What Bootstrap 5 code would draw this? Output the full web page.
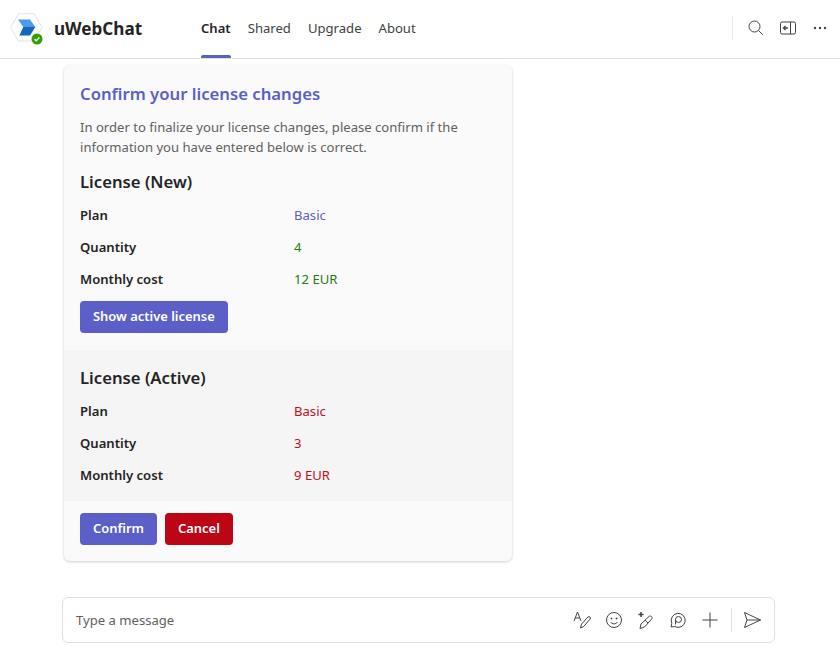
<!DOCTYPE html>
<html lang="en"><head><meta charset="utf-8">
<link href="https://cdn.jsdelivr.net/npm/bootstrap@5.3.0/dist/css/bootstrap.min.css" rel="stylesheet">
<style>
html,body{height:652px;overflow:hidden}
body{font-family:"Noto Sans","Open Sans","Liberation Sans",sans-serif;font-size:13.1px;color:#242424;background:#fff}
.shell{height:652px}
.topbar{height:59px;border-bottom:1px solid #e0e0e0;padding:0 13px 0 10px}
.logo-wrap{width:33px;height:32px;position:relative;margin-right:11px}
.presence{position:absolute;left:21px;top:20px;width:12px;height:12px}
.appname{font-size:17.1px;font-weight:700;color:#242424;width:131px;line-height:24px}
.tabs{gap:17px;height:58px}
.tabitem{height:58px;line-height:57px;color:#424242;font-size:13.1px;position:relative}
.tabitem.on{font-weight:600;color:#242424}
.tabitem.on::after{content:"";position:absolute;left:0;right:0;bottom:0;height:3px;background:#5b5fc7;border-radius:2px 2px 0 0}
.vline{width:1px;height:24px;background:#e8e8e8;margin-right:-1px}
.chatzone{padding:6px 0 0 64px}
.panel{width:448px;height:496px;background:#fafafa;border-radius:6px;box-shadow:0 1px 3px rgba(0,0,0,.2);overflow:hidden}
.topblock{padding:17px 16px 0;height:285px}
.ttl{font-size:16.7px;font-weight:600;color:#5b5fc7;line-height:24px;margin:0 0 11px}
.intro{color:#616161;line-height:20px;margin:0 0 13px}
.sect{font-size:16.7px;font-weight:600;line-height:24px;margin:0 0 6px;color:#242424}
.datarow{height:32px;align-items:center}
.lab{width:214px;font-weight:600;color:#242424}
.v-brand{color:#5b5fc7}.v-green{color:#237b17}.v-red{color:#c50f1f}
.actbtn{height:32px;padding:0 13px;border:0;border-radius:4px;font-size:12.95px;font-weight:600;color:#fff;background:#5b5fc7}
.actbtn.red{background:#bc0515}
.midblock{background:#f5f5f5;height:151px;padding:16px 16px 0}
.actgap{margin-top:5px}
.botblock{padding:12px 16px 0;gap:8px}
.composer{position:absolute;left:62px;top:597px;width:713px;height:46px;border:1px solid #e0e0e0;border-radius:6px;background:#fff;padding:0 12px 0 13px;color:#616161}
.composer svg{display:block}
.msghint{padding-top:1px}
.toolrow{gap:12px}
.topicons{gap:16px;margin-bottom:2px}
.dotsicon{margin-left:1px}
.sepv{width:1px;height:24px;background:#e0e0e0;margin:0 -2px 0 -1px}
</style></head><body>
<div class="shell position-relative">
<header class="topbar d-flex align-items-center">
  <div class="logo-wrap">
    <svg width="33" height="32" viewBox="0 0 33 32"><path d="M8.500 .8h15.500L32.300 14.500 24 28H8.500L.5 14.500z" fill="#fff" stroke="#e3e3e3"/><path d="M8 6.500h12l5.300 7.500h-12z" fill="#4a9be8"/><path d="M13.300 14h12l-5.300 8.500H9.300z" fill="#1466b8"/></svg>
    <svg class="presence" viewBox="0 0 12 12"><circle cx="6" cy="6" r="5.500" fill="#34a000"/><path d="M3.500 6.200l1.700 1.600 3.200-3.300" fill="none" stroke="#fff" stroke-width="1.300"/></svg>
  </div>
  <div class="appname">uWebChat</div>
  <nav class="tabs d-flex ms-3">
    <div class="tabitem on">Chat</div><div class="tabitem">Shared</div><div class="tabitem">Upgrade</div><div class="tabitem">About</div>
  </nav>
  <div class="ms-auto d-flex align-items-center topicons">
    <div class="vline"></div>
    <svg width="16" height="16" viewBox="0 0 16 16" fill="none" stroke="#424242"><circle cx="6.500" cy="6.500" r="5.500"/><path d="M10.500 10.500L15 15"/></svg>
    <svg width="16" height="14" viewBox="0 0 16 14" fill="none" stroke="#424242"><rect x=".5" y="1" width="15" height="12" rx="1.500"/><path d="M10.500 1v12"/><path d="M8 7H3.500M5.500 5L3.500 7l2 2" stroke-width="1.300"/></svg>
    <svg class="dotsicon" width="14" height="4" viewBox="0 0 14 4" fill="#424242"><circle cx="2" cy="2" r="1.200"/><circle cx="7" cy="2" r="1.200"/><circle cx="12" cy="2" r="1.200"/></svg>
  </div>
</header>
<main class="chatzone">
  <section class="panel d-flex flex-column">
    <div class="topblock">
      <h1 class="ttl">Confirm your license changes</h1>
      <p class="intro">In order to finalize your license changes, please confirm if the information you have entered below is correct.</p>
      <h2 class="sect">License (New)</h2>
      <div class="d-flex datarow"><div class="lab">Plan</div><div class="v-brand">Basic</div></div>
      <div class="d-flex datarow"><div class="lab">Quantity</div><div class="v-green">4</div></div>
      <div class="d-flex datarow"><div class="lab">Monthly cost</div><div class="v-green">12 EUR</div></div>
      <button class="actbtn actgap">Show active license</button>
    </div>
    <div class="midblock">
      <h2 class="sect">License (Active)</h2>
      <div class="d-flex datarow"><div class="lab">Plan</div><div class="v-red">Basic</div></div>
      <div class="d-flex datarow"><div class="lab">Quantity</div><div class="v-red">3</div></div>
      <div class="d-flex datarow"><div class="lab">Monthly cost</div><div class="v-red">9 EUR</div></div>
    </div>
    <div class="botblock d-flex">
      <button class="actbtn">Confirm</button><button class="actbtn red">Cancel</button>
    </div>
  </section>
</main>
<div class="composer d-flex align-items-center justify-content-between">
  <span class="msghint">Type a message</span>
  <div class="d-flex align-items-center toolrow">
    <svg width="20" height="20" viewBox="0 0 20 20" fill="none" stroke="#424242"><path d="M2 11L5.500 2 9 11M3.200 8h4.600"/><path d="M8.500 18l1-4 6.500-7c1.200-1.200 3.200.5 2.200 2l-6.500 7.500z"/></svg>
    <svg width="20" height="20" viewBox="0 0 20 20" fill="none" stroke="#424242"><circle cx="10" cy="10" r="7.500"/><circle cx="7.500" cy="8.500" r=".9" fill="#424242" stroke="none"/><circle cx="12.500" cy="8.500" r=".9" fill="#424242" stroke="none"/><path d="M6.500 12c1.800 2.500 5.200 2.500 7 0"/></svg>
    <svg width="20" height="20" viewBox="0 0 20 20" fill="none" stroke="#424242"><path d="M4 18.500l1-4.500 8-7.500c1.500-1.300 4 .5 2.800 2.300L8.500 17z"/><path d="M9 10l3 3"/><path d="M5 2v5M2.500 4.500h5" stroke-width="1.500"/></svg>
    <svg width="20" height="20" viewBox="0 0 20 20" fill="none" stroke="#424242"><path d="M3 17l.8-3.800A7 7 0 1 1 6.800 16.500z"/><circle cx="10.500" cy="9.500" r="3"/><path d="M7.500 14.500V9.500"/></svg>
    <svg width="20" height="20" viewBox="0 0 20 20" fill="none" stroke="#424242"><path d="M10 2.500v15M2.500 10h15"/></svg>
    <div class="sepv"></div>
    <svg width="20" height="20" viewBox="0 0 20 20" fill="none" stroke="#424242"><path d="M2.500 2.500l16 7.500-16 7.500 2.500-7.500zM5 10h13.500"/></svg>
  </div>
</div>
</div>
</body></html>
